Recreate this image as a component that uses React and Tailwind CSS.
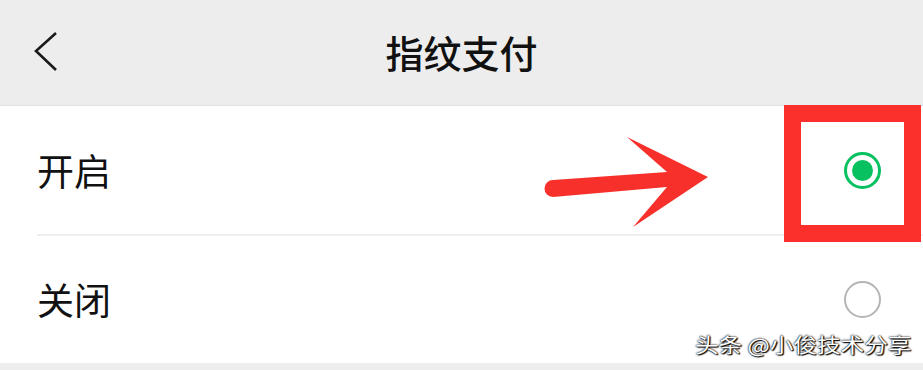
import React, { useState } from 'react';

const font = { fontFamily: '"Noto Sans CJK SC", "Noto Sans", sans-serif' };

function Radio({ checked }) {
  if (checked) {
    return (
      <div className="w-[37px] h-[37px] rounded-full border-[3px] border-[#07c160] flex items-center justify-center">
        <div className="w-[21px] h-[21px] rounded-full bg-[#07c160]" />
      </div>
    );
  }
  return <div className="w-[37px] h-[37px] rounded-full border-[2.5px] border-[#b5b5b5]" />;
}

export default function App() {
  const [on, setOn] = useState(true);

  return (
    <div className="relative w-[923px] h-[370px] bg-[#ededed] overflow-hidden text-[#111]" style={font}>
      {/* 顶部导航 */}
      <div className="relative h-[106px] flex items-center justify-center border-b border-[#e2e2e2]">
        <svg className="absolute left-[32px] top-[30px]" width="30" height="44" viewBox="0 0 30 44">
          <polyline points="24,3 4,21 24,40" fill="none" stroke="#1a1a1a" strokeWidth="2.6" strokeLinejoin="miter" />
        </svg>
        <h1 className="text-[38px] font-medium leading-none -mt-[1px]">指纹支付</h1>
      </div>

      {/* 选项 */}
      <div className="bg-white">
        <div className="h-[128px] flex items-center justify-between pl-[37px] pr-[42px]" onClick={() => setOn(true)}>
          <span className="text-[37px] leading-none">开启</span>
          <Radio checked={on} />
        </div>
        <div className="ml-[37px] h-[2px] bg-[#eeeeee]" />
        <div className="h-[127px] flex items-center justify-between pl-[37px] pr-[42px]" onClick={() => setOn(false)}>
          <span className="text-[37px] leading-none">关闭</span>
          <Radio checked={!on} />
        </div>
      </div>

      {/* 标注 */}
      <div className="absolute left-[784px] top-[105px] w-[137px] h-[137px] border-[17px] border-[#fb302c]" />
      <svg className="absolute left-0 top-0 pointer-events-none" width="923" height="370">
        <path
          d="M553 180 L667 172 L627 137 L708 177 L633 227 L667 187 L553 197 A8.5 8.5 0 0 1 553 180 Z"
          fill="#f7302b"
        />
      </svg>

      {/* 水印 */}
      <div className="absolute left-[695px] top-[335px] text-[20px] leading-none text-white whitespace-nowrap origin-left scale-x-[1.18] [text-shadow:0_0_1px_#000,0_0_2px_#000,1px_1px_1px_#000]">
        头条 @小俊技术分享
      </div>
    </div>
  );
}
